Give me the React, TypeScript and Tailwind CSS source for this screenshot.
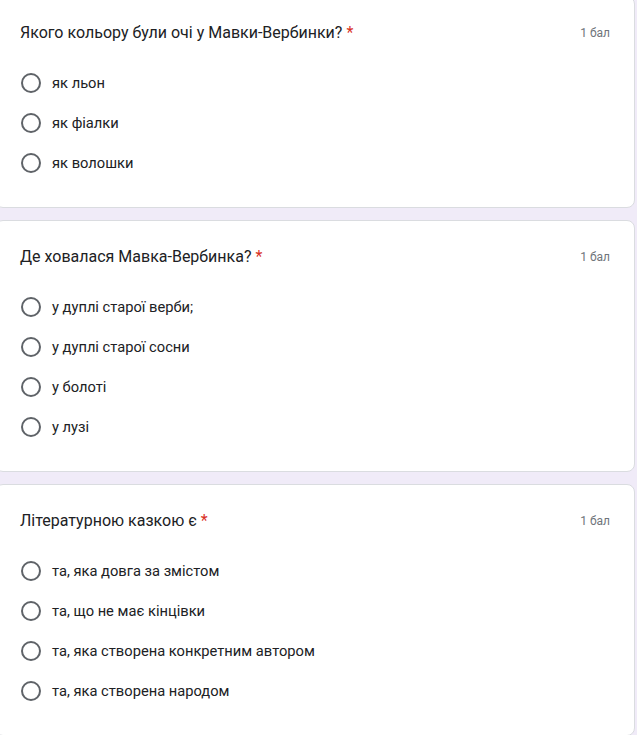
const questions = [
  {
    title: 'Якого кольору були очі у Мавки-Вербинки?',
    options: ['як льон', 'як фіалки', 'як волошки']
  },
  {
    title: 'Де ховалася Мавка-Вербинка?',
    options: ['у дуплі старої верби;', 'у дуплі старої сосни', 'у болоті', 'у лузі']
  },
  {
    title: 'Літературною казкою є',
    options: [
      'та, яка довга за змістом',
      'та, що не має кінцівки',
      'та, яка створена конкретним автором',
      'та, яка створена народом'
    ]
  }
]

function Radio() {
  return <span className="ml-px h-5 w-5 shrink-0 rounded-full border-2 border-[#5f6368]" />
}

export default function App() {
  return (
    <div className="h-[735px] overflow-hidden bg-[#f0ebf8] font-['Roboto',sans-serif]">
      <div className="-mt-1 flex flex-col gap-[12px]">
        {questions.map((q, i) => (
          <div
            key={i}
            className="-ml-[5px] w-[640px] rounded-lg border border-[#dadce0] bg-white px-6 pt-6 pb-6"
          >
            {/* Header */}
            <div className="flex items-center justify-between">
              <h2 className="text-base leading-6 text-[#202124]">
                {q.title} <span className="text-[#d93025]">*</span>
              </h2>
              <span className="text-xs text-[#70757a]">1 бал</span>
            </div>

            {/* Options */}
            <div className="mt-[18px] flex flex-col">
              {q.options.map((opt, j) => (
                <label key={j} className="flex h-10 items-center gap-[11px]">
                  <Radio />
                  <span className="text-[14.7px] text-[#202124]">{opt}</span>
                </label>
              ))}
            </div>
          </div>
        ))}
      </div>
    </div>
  )
}
